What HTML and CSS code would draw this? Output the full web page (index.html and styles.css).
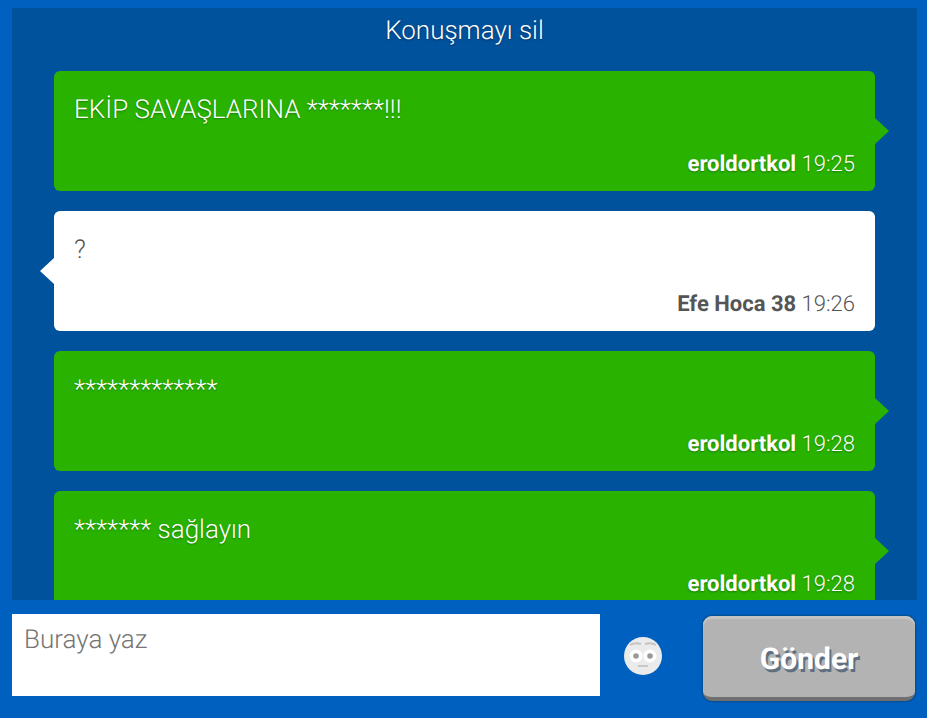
FILE: index.html
```html
<!doctype html>
<html lang="tr">
    <head>
        <meta charset="utf-8">
        <title>Sohbet</title>
        <link rel="stylesheet" href="styles.css">
    </head>
    <body>
        <div id="chat">
            <div class="panel">
                <div class="title">Konuşmayı sil</div>
                <div class="msg me">
                    <p>EKİP SAVAŞLARINA *******!!!</p>
                    <div class="meta"><b>eroldortkol</b> 19:25</div>
                </div>
                <div class="msg other">
                    <p>?</p>
                    <div class="meta"><b>Efe Hoca 38</b> 19:26</div>
                </div>
                <div class="msg me">
                    <p>*************</p>
                    <div class="meta"><b>eroldortkol</b> 19:28</div>
                </div>
                <div class="msg me">
                    <p>******* sağlayın</p>
                    <div class="meta"><b>eroldortkol</b> 19:28</div>
                </div>
            </div>
            <div class="compose">
                <textarea placeholder="Buraya yaz"></textarea>
                <svg class="smiley" width="38" height="38" viewBox="0 0 38 38">
                    <circle cx="19" cy="19" r="19" fill="#ebebeb"/>
                    <path d="M6 8 Q11 5 17 7 M21 7 Q27 5 32 8" stroke="#c4c4c4" stroke-width="2" fill="none"/>
                    <circle cx="12" cy="19" r="6.5" fill="#fff"/>
                    <circle cx="26" cy="19" r="6.5" fill="#fff"/>
                    <circle cx="12" cy="19" r="2.8" fill="#999"/>
                    <circle cx="26" cy="19" r="2.8" fill="#999"/>
                    <path d="M14 29 H24" stroke="#c8c8c8" stroke-width="2"/>
                </svg>
                <button class="send">Gönder</button>
            </div>
        </div>
    </body>
</html>
```

FILE: styles.css
```css
html, body { height: 100%; margin: 0; }
body { background: #0060bf; font-family: Roboto, sans-serif; overflow: hidden; text-rendering: geometricPrecision; }
#chat { height: 718px; display: flex; flex-direction: column; padding: 8px 10px 0 12px; box-sizing: border-box; }

.panel { height: 592px; flex: none; background: #00529c; padding: 0 42px; overflow: hidden; box-sizing: border-box; }
.title { height: 63px; padding-top: 7px; box-sizing: border-box; text-align: center; color: #fff; font-size: 26px; line-height: 32px; font-weight: 300; text-shadow: 0 1px 2px rgba(0,0,0,0.4); }

.msg { position: relative; height: 120px; margin-bottom: 20px; padding: 21px 20px 20px; box-sizing: border-box; border-radius: 6px; font-weight: 300; font-size: 26px; }
.msg p { margin: 0; line-height: 36px; height: 60px; }
.msg .meta { text-align: right; font-size: 22px; line-height: 26px; }
.msg .meta b { font-weight: 700; }
.msg::after { content: ""; position: absolute; top: 47px; border: 13px solid transparent; }

.msg.me { background: #29b300; color: #fff; text-shadow: 0 1px 2px rgba(0,0,0,0.35); }
.msg.me::after { left: 100%; border-left: 14px solid #29b300; border-right: 0; }
.msg.other { background: #fff; color: #555; }
.msg.other::after { right: 100%; border-right: 14px solid #fff; border-left: 0; }

.compose { display: flex; align-items: flex-start; padding-top: 14px; }
.compose textarea { width: 588px; height: 82px; flex: none; margin: 0; padding: 10px 12px; box-sizing: border-box; border: 0; border-radius: 0; resize: none; outline: none; font-family: Roboto, sans-serif; font-size: 26px; font-weight: 300; line-height: 32px; background: #fff; text-rendering: geometricPrecision; }
.compose textarea::placeholder { color: #757575; opacity: 1; }
.smiley { flex: none; margin: 23px 0 0 24px; filter: blur(0.6px); }
.send { width: 212px; height: 85px; flex: none; margin: 2px 0 0 41px; padding: 6px 0 0; border: 0; border-bottom: 4px solid #707070; border-radius: 9px; background: #b3b3b3; box-shadow: 0 0 0 1.5px #00529c, inset 0 3px 1px #c4c4c4; color: #fff; font-family: Roboto, sans-serif; font-size: 30px; font-weight: 700; text-shadow: 2px 3px 0 #5f6f80; text-rendering: geometricPrecision; }
```
